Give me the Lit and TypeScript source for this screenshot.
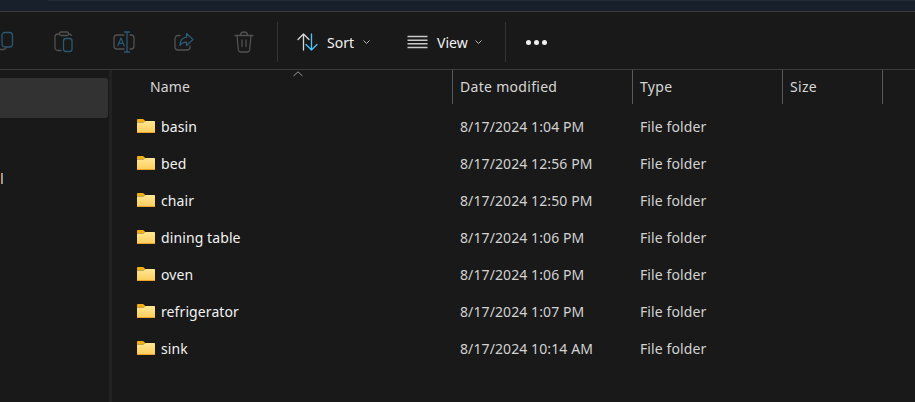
import { LitElement, html, css, svg } from "lit";
import { customElement } from "lit/decorators.js";

const rows = [
  ["basin", "8/17/2024 1:04 PM"],
  ["bed", "8/17/2024 12:56 PM"],
  ["chair", "8/17/2024 12:50 PM"],
  ["dining table", "8/17/2024 1:06 PM"],
  ["oven", "8/17/2024 1:06 PM"],
  ["refrigerator", "8/17/2024 1:07 PM"],
  ["sink", "8/17/2024 10:14 AM"],
];

const grey = "#515151";
const blue = "#2b5873";

const folder = html`<svg class="folder" width="18" height="14" viewBox="0 0 18 14">
  <defs><linearGradient id="fg" x1="0" y1="0" x2="0" y2="1"><stop offset="0" stop-color="#ffe893"/><stop offset="1" stop-color="#fdcb5a"/></linearGradient></defs>
  <path d="M0 3V1.200C0 .5.500 0 1.200 0h4.400c.3 0 .6.1.8.3L8.600 2.200 7 3.500H0z" fill="#f6ad10"/>
  <path d="M0 3.400h6.400c.4 0 .7-.1 1-.4L8.600 2H17c.6 0 1 .4 1 1v10c0 .6-.4 1-1 1H1c-.6 0-1-.4-1-1z" fill="url(#fg)"/>
  <path d="M0 12.900V13c0 .6.400 1 1 1h16c.6 0 1-.4 1-1v-.1z" fill="#e9a52c"/>
</svg>`;

const icon = (w: number, h: number, body: unknown) =>
  html`<svg width=${w} height=${h} viewBox="0 0 ${w} ${h}" fill="none" stroke-width="1.300" stroke-linecap="round" stroke-linejoin="round">${body}</svg>`;

const copyIcon = icon(14, 22, svg`
  <rect x="2" y="1.500" width="10.500" height="14.500" rx="3" stroke=${blue}/>
  <path d="M0 18.500h3.500c1 0 2-.6 2.400-1.500" stroke=${grey}/>`);
const pasteIcon = icon(20, 22, svg`
  <path d="M7 19.500H4a3 3 0 0 1-3-3V6a3 3 0 0 1 3-3h1.500M14.500 3H15a3 3 0 0 1 2.500 1.500" stroke=${grey}/>
  <rect x="5.500" y="1" width="9" height="3.500" rx="1.500" stroke=${grey}/>
  <rect x="9.500" y="7.500" width="8.500" height="13" rx="2.500" stroke=${blue}/>`);
const renameIcon = icon(22, 22, svg`
  <path d="M11 4H4a3 3 0 0 0-3 3v8a3 3 0 0 0 3 3h7M17 4h1a3 3 0 0 1 3 3v8a3 3 0 0 1-3 3h-1" stroke=${grey}/>
  <path d="M14 1v20M11.500 1h5M11.500 21h5" stroke=${blue}/>
  <path d="M4.700 15l3.300-8 3.300 8M6 12.300h4" stroke=${blue} stroke-width="1.200"/>`);
const shareIcon = icon(20, 20, svg`
  <path d="M6 3.500H4a3 3 0 0 0-3 3V15a3 3 0 0 0 3 3h9a3 3 0 0 0 3-3v-1" stroke=${grey}/>
  <path d="M12.500 1.500L19 7.500l-6.500 6v-3.300c-3 0-5 1-6.500 3.300 0-4.500 2.300-7.700 6.500-8.300z" stroke=${blue}/>`);
const trashIcon = icon(20, 22, svg`
  <path d="M1 4.500h18M6.500 4.500C6.500 2.300 8 1 10 1s3.500 1.300 3.500 3.500M3 4.500l1.300 14a2.500 2.500 0 0 0 2.500 2.500h6.400a2.500 2.500 0 0 0 2.500-2.500L17 4.500M8 9v6.500M12 9v6.500" stroke=${grey}/>`);
const sortIcon = icon(21, 20, svg`
  <path d="M6.500 18V2M1 7.500L6.500 2 12 7.500" stroke="#d8d8d8"/>
  <path d="M14.500 2v16M9 12.500l5.500 5.500 5.500-5.500" stroke="#4cc2ff"/>`);
const viewIcon = icon(21, 14, svg`
  <path d="M.5 1.500h20M.5 5.200h20M.5 8.800h20M.5 12.500h20" stroke="#c8c8c8" stroke-linecap="butt" stroke-width="1.400"/>`);
const chevron = html`<svg class="chev" width="7" height="5" viewBox="0 0 7 5" fill="none"><path d="M.5.500L3.500 3.500 6.500.500" stroke="#b5b5b5" stroke-width="1"/></svg>`;

@customElement("app-root")
export class AppRoot extends LitElement {
  static styles = css`
    :host {
      display: flex;
      flex-direction: column;
      width: 915px;
      height: 402px;
      overflow: hidden;
      background: #191919;
      color: #fff;
      font-family: "Noto Sans", "Open Sans", sans-serif;
      font-size: 14px;
    }
    .strip {
      height: 11px;
      flex: none;
      background: #18202b;
      border-bottom: 1px solid #3b3b3b;
    }
    .strip i { display: block; height: 1px; margin-left: 48px; background: #242c38; }
    .toolbar {
      height: 54px;
      padding-top: 3px;
      flex: none;
      display: flex;
      align-items: center;
      border-bottom: 1px solid #3b3b3b;
    }
    .tool { display: flex; flex: none; justify-content: center; }
    .copy { width: 14px; margin-right: 40px; }
    .paste { width: 20px; margin-right: 39px; }
    .rename { width: 22px; margin-right: 39px; }
    .share { width: 20px; margin-right: 40px; }
    .trash { width: 20px; margin-right: 23px; }
    .sep { width: 1px; height: 40px; background: #333; flex: none; }
    .btn { display: flex; align-items: center; flex: none; font-size: 14px; color: #f2f2f2; }
    .sort { margin-left: 19px; width: 110px; }
    .view { width: 98px; }
    .sort svg:first-child { margin-right: 9px; }
    .view svg:first-child { margin-right: 9px; }
    .chev { margin-left: 9px; }
    .view .chev { margin-left: 7px; }
    .more { display: flex; gap: 3px; margin-left: 20px; }
    .more i { width: 5px; height: 5px; border-radius: 50%; background: #f0f0f0; }
    .body { flex: 1; display: flex; min-height: 0; }
    .side { width: 112px; flex: none; padding-top: 8px; box-sizing: border-box; border-right: 3px solid #222; }
    .sel { width: 108px; height: 40px; margin-right: -1px; background: #323232; border-radius: 0 3px 3px 0; }
    .cut { margin-top: 55px; width: 2px; height: 11px; background: linear-gradient(90deg, #d98f45 50%, #6a9cc4 50%); margin-left: 1px; }
    .main { flex: 1; min-width: 0; position: relative; }
    .caret { position: absolute; left: 181px; top: 1px; }
    .head { display: grid; grid-template-columns: 341px 180px 150px 100px; height: 32px; }
    .h { border-right: 1px solid #5a5a5a; padding-left: 7px; line-height: 34px; color: #d6d6d6; white-space: nowrap; letter-spacing: 0.3px; }
    .h.name { padding-left: 38px; letter-spacing: 0.1px; }
    .list { padding-top: 6px; }
    .row { display: grid; grid-template-columns: 341px 180px 150px; height: 37px; align-items: center; color: #d2d2d2; white-space: nowrap; letter-spacing: 0.1px; }
    .row > div { padding-left: 7px; }
    .row > .n { display: flex; align-items: center; padding-left: 25px; color: #f2f2f2; }
    .folder { margin-right: 6px; margin-top: -2px; flex: none; }
  `;

  render() {
    return html`
      <div class="strip"><i></i></div>
      <div class="toolbar">
        <div class="tool copy">${copyIcon}</div>
        <div class="tool paste">${pasteIcon}</div>
        <div class="tool rename">${renameIcon}</div>
        <div class="tool share">${shareIcon}</div>
        <div class="tool trash">${trashIcon}</div>
        <div class="sep"></div>
        <div class="btn sort">${sortIcon}<span>Sort</span>${chevron}</div>
        <div class="btn view">${viewIcon}<span>View</span>${chevron}</div>
        <div class="sep"></div>
        <div class="more"><i></i><i></i><i></i></div>
      </div>
      <div class="body">
        <div class="side"><div class="sel"></div><div class="cut"></div></div>
        <div class="main">
          <svg class="caret" width="10" height="6" viewBox="0 0 10 6" fill="none"><path d="M.5 5L5 .8 9.500 5" stroke="#9a9a9a"/></svg>
          <div class="head">
            <div class="h name">Name</div>
            <div class="h">Date modified</div>
            <div class="h">Type</div>
            <div class="h">Size</div>
          </div>
          <div class="list">
            ${rows.map(
              ([n, d]) => html`<div class="row">
                <div class="n">${folder}<span>${n}</span></div>
                <div>${d}</div>
                <div>File folder</div>
              </div>`
            )}
          </div>
        </div>
      </div>
    `;
  }
}
